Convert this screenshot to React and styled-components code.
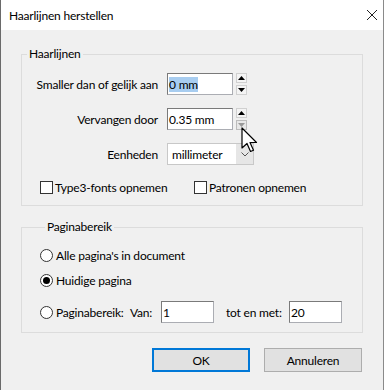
import React from 'react'
import styled, { createGlobalStyle } from 'styled-components';

const Global = createGlobalStyle`
  html, body { margin: 0; padding: 0; background: #f0f0f0; }
  * { box-sizing: border-box; }
`;

const Window = styled.div`
  width: 384px;
  height: 390px;
  background: #f0f0f0;
  border-left: 1px solid #6a6a6a;
  border-right: 1px solid #8a8a8a;
  font-family: Lato, "Noto Sans", sans-serif;
  font-size: 12px;
  letter-spacing: -0.2px;
  color: #000;
  position: relative;
  overflow: hidden;
`;

const TitleBar = styled.div`
  height: 30px;
  background: #fff;
  display: flex;
  align-items: center;
  justify-content: space-between;
  padding: 0 5px 0 8px;
`;

const Body = styled.div`
  padding: 17px 20px 0 20px;
  display: flex;
  flex-direction: column;
  gap: 14px;
`;

const Group = styled.fieldset`
  margin: 0;
  border: 1px solid #dcdcdc;
  padding: ${p => p.$pad};
  height: ${p => p.$h}px;
  display: flex;
  flex-direction: column;
  gap: ${p => p.$gap}px;
`;

const Legend = styled.legend`
  padding: 0 2px;
  margin-left: 5px;
  line-height: 14px;
`;

const FieldRow = styled.div`
  display: flex;
  align-items: center;
  height: 22px;
`;

const FieldLabel = styled.div`
  width: 136px;
  text-align: right;
  margin-right: 9px;
  white-space: nowrap;
`;

const TextBox = styled.div`
  width: ${p => p.$w}px;
  height: 22px;
  background: #fff;
  border: 1px solid #abadb3;
  border-top-color: #7a7a7a;
  border-left-color: #7a7a7a;
  display: flex;
  align-items: center;
  padding-left: 1px;
  white-space: nowrap;
  flex-shrink: 0;
`;

const Selected = styled.span`
  background: #a8cdf0;
  line-height: 15px;
`;

const Spinner = styled.div`
  display: flex;
  flex-direction: column;
  justify-content: space-between;
  height: 22px;
  margin-left: 3px;
`;

const SpinButton = styled.div`
  width: 11px;
  height: 10px;
  border: 1px solid ${p => (p.$hover ? '#bcbcbc' : '#d0d0d0')};
  background: ${p => (p.$hover ? '#e8e8e8' : '#f4f4f4')};
  display: flex;
  align-items: center;
  justify-content: center;
`;

const Select = styled.div`
  width: 87px;
  height: 22px;
  background: #fff;
  border: 1px solid #c8c8c8;
  display: flex;
  align-items: stretch;
`;

const SelectValue = styled.div`
  flex: 1;
  display: flex;
  align-items: center;
  padding-left: 4px;
`;

const SelectArrow = styled.div`
  width: 17px;
  background: #e6e6e6;
  display: flex;
  align-items: center;
  justify-content: center;
`;

const CheckRow = styled.div`
  display: flex;
  align-items: center;
  height: 14px;
  margin-top: 2px;
  padding-left: 18px;
`;

const CheckItem = styled.label`
  display: flex;
  align-items: center;
  width: ${p => p.$w}px;
  white-space: nowrap;
`;

const Box = styled.span`
  width: 13px;
  height: 13px;
  border: 1px solid #333;
  background: #fff;
  margin-right: 2px;
  flex-shrink: 0;
`;

const Radio = styled.span`
  width: 13px;
  height: 13px;
  border: 1px solid #333;
  border-radius: 50%;
  background: #fff;
  margin-right: 3px;
  flex-shrink: 0;
  display: flex;
  align-items: center;
  justify-content: center;
  &::after {
    content: '';
    width: 7px;
    height: 7px;
    border-radius: 50%;
    background: ${p => (p.$on ? '#000' : 'transparent')};
  }
`;

const RadioRow = styled.div`
  display: flex;
  align-items: center;
  height: ${p => p.$h || 14}px;
  margin-top: ${p => p.$mt || 0}px;
  white-space: nowrap;
`;

const Caption = styled.span`
  width: ${p => p.$w}px;
  flex-shrink: 0;
`;

const Footer = styled.div`
  display: flex;
  justify-content: flex-end;
  gap: 14px;
  padding-right: 1px;
  margin-top: 1px;
`;

const Button = styled.div`
  width: 98px;
  height: 24px;
  background: #e1e1e1;
  border: ${p => (p.$default ? '2px solid #0078d7' : '1px solid #adadad')};
  display: flex;
  align-items: center;
  justify-content: center;
`;

const Cursor = styled.svg`
  position: absolute;
  left: 240px;
  top: 127px;
`;

const Up = () => (
  <svg width="7" height="4" viewBox="0 0 7 4"><path d="M3.5 0 L7 4 L0 4 Z" fill="#000" /></svg>
);
const Down = ({ c = '#000' }) => (
  <svg width="7" height="4" viewBox="0 0 7 4"><path d="M0 0 L7 0 L3.5 4 Z" fill={c} /></svg>
);

function App() {
  return (
    <Window>
      <Global />
      <TitleBar>
        <span>Haarlijnen herstellen</span>
        <svg width="12" height="12" viewBox="0 0 12 12">
          <path d="M1 1 L11 11 M11 1 L1 11" stroke="#222" strokeWidth="1" />
        </svg>
      </TitleBar>
      <Body>
        <Group $h={159} $pad="12px 0 0 0" $gap={13}>
          <Legend>Haarlijnen</Legend>
          <FieldRow>
            <FieldLabel>Smaller dan of gelijk aan</FieldLabel>
            <TextBox $w={66}><Selected>0 mm</Selected></TextBox>
            <Spinner>
              <SpinButton><Up /></SpinButton>
              <SpinButton><Down /></SpinButton>
            </Spinner>
          </FieldRow>
          <FieldRow>
            <FieldLabel>Vervangen door</FieldLabel>
            <TextBox $w={66}>0.35 mm</TextBox>
            <Spinner>
              <SpinButton><Up /></SpinButton>
              <SpinButton $hover><Down c="#999" /></SpinButton>
            </Spinner>
          </FieldRow>
          <FieldRow>
            <FieldLabel>Eenheden</FieldLabel>
            <Select>
              <SelectValue>millimeter</SelectValue>
              <SelectArrow>
                <svg width="8" height="5" viewBox="0 0 8 5"><path d="M0.5 0.5 L4 4 L7.5 0.5" stroke="#555" fill="none" /></svg>
              </SelectArrow>
            </Select>
          </FieldRow>
          <CheckRow>
            <CheckItem $w={154}><Box />Type3-fonts opnemen</CheckItem>
            <CheckItem $w={150}><Box />Patronen opnemen</CheckItem>
          </CheckRow>
        </Group>
        <Group $h={113} $pad="14px 0 0 18px" $gap={11}>
          <Legend>Paginabereik</Legend>
          <RadioRow><Radio />Alle pagina's in document</RadioRow>
          <RadioRow><Radio $on />Huidige pagina</RadioRow>
          <RadioRow $h={22} $mt={3}>
            <Radio />
            <Caption $w={74}>Paginabereik:</Caption>
            <Caption $w={31}>Van:</Caption>
            <TextBox $w={53}>1</TextBox>
            <Caption $w={12} />
            <Caption $w={63}>tot en met:</Caption>
            <TextBox $w={53}>20</TextBox>
          </RadioRow>
        </Group>
        <Footer>
          <Button $default>OK</Button>
          <Button>Annuleren</Button>
        </Footer>
      </Body>
      <Cursor width="20" height="28" viewBox="0 0 20 28">
        <path d="M1 1 L1 21 L6 16.5 L9.5 24.5 L12.5 23.2 L9 15.5 L15.5 15.5 Z" fill="#fff" stroke="#000" strokeWidth="1.2" strokeLinejoin="round" />
      </Cursor>
    </Window>
  )
}

export default App;
